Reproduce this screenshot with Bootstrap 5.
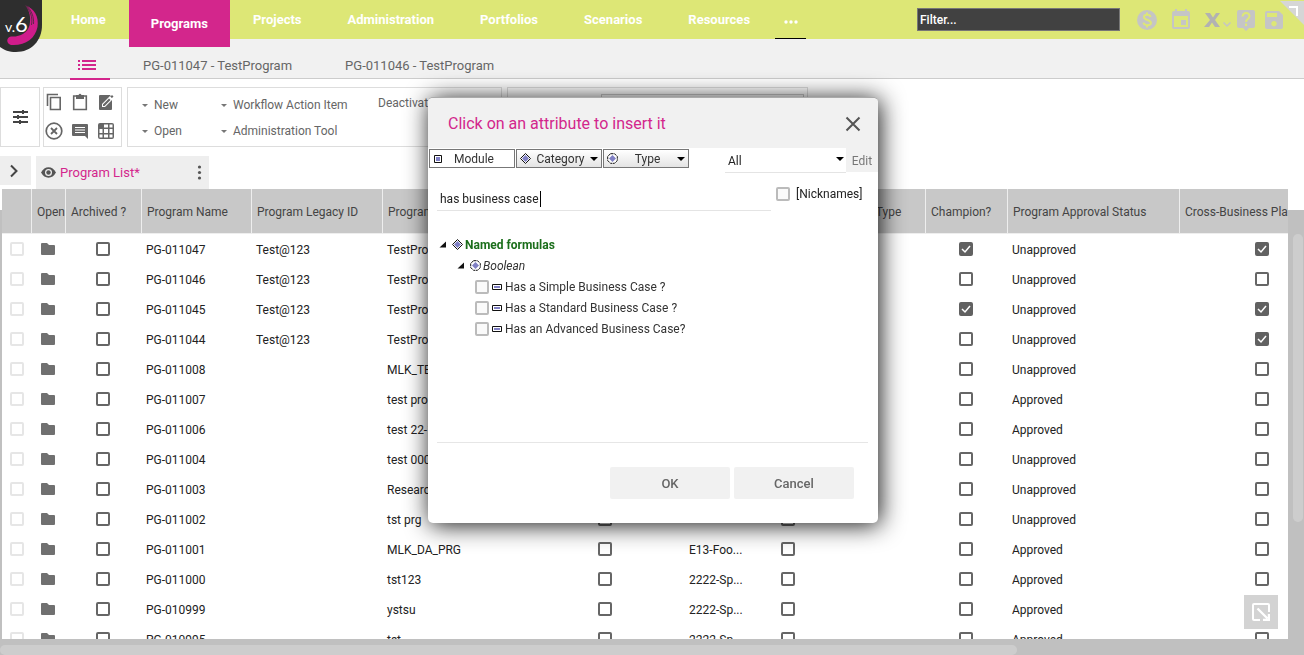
<!DOCTYPE html>
<html lang="en">
<head>
<meta charset="utf-8">
<meta name="viewport" content="width=device-width, initial-scale=1">
<title>Programs</title>
<link rel="stylesheet" href="https://cdn.jsdelivr.net/npm/bootstrap@5.3.0/dist/css/bootstrap.min.css">
<style>
:root{--pink:#d3268c;--lime:#dde776;--ink:#666}
body{font-family:Roboto,"Liberation Sans",sans-serif;font-size:12px;line-height:16px;color:#222}
button,input,select{font-family:inherit}
a{text-decoration:none}
svg{display:block;flex:none}
.topbar{background:var(--lime);height:39px;position:relative;z-index:2}
.logo{width:42px}
.topmenu .nav-link{color:#fff;font-size:13px;font-weight:700;line-height:18px;height:39px;padding:11px 23px 0}
.topmenu .nav-link.active{background:var(--pink);height:47px;padding:15px 22px 0}
.topmenu{margin-left:6px}
.topmenu .more{width:31px;margin-left:2px;padding:20px 0 0;border-bottom:1px solid #000}
.filter-box{width:203px;height:23px;background:#414141;border:1px solid #777;color:#fff;font-size:12px;padding:0 2px}
.filter-box::placeholder{color:#fff;opacity:1;font-weight:500}
.top-icons{width:184px;padding-left:16px;gap:13px;color:#c5c5c5}
.icon-btn{border:0;background:none;padding:0;color:inherit;display:block}
.excel svg{overflow:visible}
.fold{position:absolute;right:0;top:1px}
.subbar{height:40px;background:#f1f1f1;border-bottom:1px solid #ccc;padding-left:70px}
.subbar a{color:var(--ink);font-size:13px;line-height:18px;padding-top:18px;height:41px;margin-right:53px}
.subbar a.active{width:40px;border-bottom:2px solid var(--pink);color:var(--pink);padding:21px 0 0 8px;margin-right:33px}
.ribbon{padding-top:8px;height:68px}
.panel{border:1px solid #ddd;height:60px;background:#fff;color:var(--ink)}
.panel-tune{width:40px}
.panel-tools{width:79px;margin:0 5px 0 3px;display:grid;grid-template-columns:repeat(3,26px);grid-template-rows:28px 30px;justify-content:end;place-items:center;padding-right:2px}
.panel-menu{width:375px;margin-right:5px;padding:4px 0 0 14px;display:grid;grid-template-columns:79px 157px 1fr;grid-template-rows:26px 26px;align-items:center}
.panel-menu button{border:0;background:none;padding:0;color:var(--ink);text-align:left;display:flex;align-items:center;gap:6px;white-space:nowrap}
.panel-menu .plain{padding-bottom:4px}
.caret-s{border:3px solid transparent;border-top-color:#777;border-bottom:0;width:6px}
.panel-view{width:301px;padding:6px 3px 0 93px}
.panel-view div{border:1px solid #ccc;height:40px}
.viewtabs{height:42px;padding-top:9px}
.expander{width:31px;height:29px;background:#eee;margin-right:5px;padding:0 0 0 6px}
.viewtab{width:173px;height:33px;background:#eee;color:var(--pink);font-size:13px;padding:0 7px 0 5px}
.viewtab a{color:var(--pink)}
.gridzone{flex:1;min-height:0;position:relative;padding:0 16px 0 2px;background:linear-gradient(#fff 21px,#c0c0c0 21px)}
.gridclip{height:100%;overflow:hidden;background:#fff}
.grid-t{table-layout:fixed;width:1344px;border-collapse:separate;border-spacing:0}
.grid-t th{height:45px;background:#c8c8c8;font-weight:400;color:#444;border-right:1px solid #eee;border-bottom:1px solid #eee;padding:1px 0 0 5px;white-space:nowrap;overflow:hidden}
.grid-t td{height:30px;padding:1px 4px 0;white-space:nowrap;overflow:hidden}
.grid-t td.mid{padding:0 2px 0 0}
.grid-t td.mid:first-child{padding:0}
.grid-t td.mid svg{margin:0 auto}
.tick{appearance:none;width:14px;height:14px;border:2px solid #666;border-radius:2px;background:#fff;margin:0;display:block;flex:none}
td .tick{margin:0 auto}
.tick:checked{background:#616161 url("data:image/svg+xml,%3Csvg xmlns='http://www.w3.org/2000/svg' viewBox='0 0 10 10'%3E%3Cpath d='M1 5l3 3 5-6' fill='none' stroke='white' stroke-width='1.5'/%3E%3C/svg%3E");border-color:#616161}
.tick.faint{border-color:#e6e6e6}
.tick.soft{border-color:#bbb;background:#fafafa}
.vthumb{position:absolute;right:1px;top:45px;width:10px;height:64%;border-radius:5px;background:#cdcdcd}
.hbar{height:16px;background:#c0c0c0;padding-top:6px}
.hbar div{width:78%;height:10px;border-radius:5px;background:#cdcdcd}
.corner{position:absolute;right:26px;bottom:10px;width:34px;height:34px;border:0;background:#d3d3d3;padding:8px;color:#fff}
.layer{display:block;padding-left:2px;pointer-events:none}
.layer .modal-dialog{max-width:450px;margin:97px auto 0}
.dlg{border:0;border-top:1px solid #aaa;border-radius:5px;height:426px;box-shadow:2px 2px 24px rgba(0,0,0,.92);overflow:hidden}
.dlg-head{background:#f1f1f1;height:50px;padding:1px 17px 0 20px}
.dlg-head h1{font-size:16px;line-height:20px;font-weight:400;color:var(--pink);margin:0}
.chips{gap:1px;padding:1px 0 0 1px}
.chip{width:86px;height:19px;border:1px solid #777;background:linear-gradient(#fff,#e4e4e4);padding:0 3px;display:flex;align-items:center;color:#333}
.chip.on{background:#fff;padding:0 8px 0 4px}
.chip span{flex:1;text-align:center}
.caret-b{border:4px solid transparent;border-top:4px solid #000;border-bottom:0}
.scope{width:121px;height:25px;margin-left:36px;appearance:none;border:0;border-bottom:1px solid #e4e4e4;padding:2px 3px 0;color:#222;background:#fff url("data:image/svg+xml,%3Csvg xmlns='http://www.w3.org/2000/svg' viewBox='0 0 8 4'%3E%3Cpath d='M0 0h8L4 4z'/%3E%3C/svg%3E") right 2px top 9px/8px 4px no-repeat}
.edit-btn{flex:1;height:24px;border:0;background:#f1f1f1;color:#777;padding:2px 0 0}
.findrow{padding:13px 0 0 9px;height:38px}
.find{width:334px;height:25px;border:0;border-bottom:1px solid #e4e4e4;padding:1px 3px 0;color:#222;outline:0}
.findwrap{position:relative}
.cursor-bar{position:absolute;left:103px;top:5px;width:1px;height:16px;background:#000}
.nick{gap:6px;margin-left:5px;height:16px}
.tree{list-style:none;margin:0 10px 0 9px;padding:23px 0 0 2px;height:232px;border-bottom:1px solid #e6e6e6}
.tree li{height:21px;display:flex;align-items:center;gap:2px;color:#333}
.tree .l2{padding-left:18px}
.tree .l3{padding-left:36px}
.tree label{display:flex;align-items:center;gap:3px}
.named{color:#1b6e1b;font-weight:700}
.dlg-foot{padding:24px 24px 0;gap:4px}
.dlg-foot button{width:120px;height:32px;border:0;border-radius:2px;background:#f1f1f1;color:#666;font-size:13px;font-weight:500;padding-top:2px}
</style>
</head>
<body class="d-flex flex-column vh-100 overflow-hidden">
<svg width="0" height="0" class="position-absolute" aria-hidden="true">
  <symbol id="dia" viewBox="0 0 11 11"><path d="M5.500 .5l5 5-5 5-5-5z" fill="#fff" stroke="#111"/><path d="M5.500 2l3.500 3.500L5.500 9 2 5.500z" fill="#8080c4"/></symbol>
  <symbol id="hex" viewBox="0 0 11 11"><path d="M3.500 .7h4l2.800 2.800v4l-2.800 2.800h-4L.7 7.500v-4z" fill="#fff" stroke="#111" stroke-dasharray="3 .6"/><path d="M5.500 2l3.500 3.500L5.500 9 2 5.500z" fill="#8080c4"/></symbol>
  <symbol id="bar" viewBox="0 0 10 6"><path d="M.5 .5h9v5h-9z" fill="#fff" stroke="#111"/><path d="M2 2h6v2H2z" fill="#8080c4"/></symbol>
  <symbol id="tri" viewBox="0 0 7 7"><path d="M7 .5v6H.5z" fill="#111"/></symbol>
  <symbol id="folder" viewBox="0 0 14 12"><path d="M1 0h5l2 2h5q1 0 1 1v8q0 1-1 1H1q-1 0-1-1V1q0-1 1-1z" fill="#707070"/></symbol>
</svg>

<header class="topbar d-flex">
  <a href="#" class="logo" aria-label="v.6 home">
    <svg width="42" height="52" viewBox="0 0 42 52"><path d="M0 0h42v25c0 16-11 27-26 27C9 52 4 50 0 47z" fill="#2e2e2e"/><path d="M25 5c10 4 14 12 12.500 22C35 39 25 46 11 45c-5-1-5-8 0-8.500 9 .5 16-3 18.500-11C31 18 30 11 25 5z" fill="#d01c8b"/><path d="M25 5c5 5 8 12 6.500 20M26 5c6 6 8 12 7.500 19" fill="none" stroke="#2e2e2e" stroke-width=".7"/><text x="5" y="32" font-family="Lato,sans-serif" font-size="14" fill="#fff">v.<tspan font-size="22">6</tspan></text></svg>
  </a>
  <nav class="topmenu nav flex-nowrap me-auto">
    <a class="nav-link" href="#">Home</a>
    <a class="nav-link active" href="#">Programs</a>
    <a class="nav-link" href="#">Projects</a>
    <a class="nav-link" href="#">Administration</a>
    <a class="nav-link" href="#">Portfolios</a>
    <a class="nav-link" href="#">Scenarios</a>
    <a class="nav-link" href="#">Resources</a>
    <a class="nav-link more" href="#" aria-label="More"><svg width="14" height="4" class="mx-auto"><g fill="#fff"><circle cx="2" cy="2" r="1.700"/><circle cx="7" cy="2" r="1.700"/><circle cx="12" cy="2" r="1.700"/></g></svg></a>
  </nav>
  <input class="filter-box mt-2" type="text" placeholder="Filter..." aria-label="Filter">
  <div class="top-icons d-flex align-items-center">
    <button class="icon-btn" aria-label="Currency"><svg width="22" height="22" viewBox="0 0 22 22"><circle cx="11" cy="11" r="10" fill="currentColor"/><path d="M14.500 8c-.5-3-6.500-3-6.500 0 0 3.500 7 2.500 7 6 0 3-7 3-7.500-.3M11 3.500v2.500M11 16v2.500" fill="none" stroke="#dde776" stroke-width="2"/></svg></button>
    <button class="icon-btn" aria-label="Calendar"><svg width="20" height="22" viewBox="0 0 20 22"><path d="M4 0h2v2h8V0h2v2h1q2 0 2 2v14q0 2-2 2H3q-2 0-2-2V4q0-2 2-2h1zM3 7v11h14V7zm7 4h5v5h-5z" fill="currentColor" fill-rule="evenodd"/></svg></button>
    <button class="icon-btn excel" aria-label="Export to Excel"><svg width="20" height="22" viewBox="0 0 20 22"><path d="M1 4h5l3 4.500L12 4h4l-5 7 5 7h-5l-3-4.500L5 18H0l6-7z" fill="#b2b2b2"/><path d="M19.500 13.500l3.500 3.500 3.500-3.500" fill="none" stroke="currentColor" stroke-width="1.500"/></svg></button>
    <div class="d-flex align-items-center" style="gap:10px">
      <button class="icon-btn" aria-label="Help"><svg width="18" height="22" viewBox="0 0 18 22"><path d="M2 1h14q2 0 2 2v14q0 2-2 2h-4l-3 3-3-3H2q-2 0-2-2V3q0-2 2-2z" fill="currentColor"/><path d="M5.500 7.500C6 3 12 3 12.500 7c0 3-3.500 3-3.500 6M9 14.500V17" fill="none" stroke="#dde776" stroke-width="2"/></svg></button>
      <button class="icon-btn" aria-label="Save"><svg width="18" height="18" viewBox="0 0 18 18"><path d="M2 0h12l4 4v12q0 2-2 2H2q-2 0-2-2V2q0-2 2-2zm0 2v4h10V2zm7 8a2.700 2.700 0 1 0 .01 0z" fill="currentColor" fill-rule="evenodd"/></svg></button>
    </div>
  </div>
  <svg class="fold" width="24" height="24"><path d="M0 0h24v24z" fill="#d6d6d6"/><path d="M9 6h8v9" fill="none" stroke="#fff" stroke-width="2"/></svg>
</header>

<nav class="subbar d-flex">
  <a href="#" class="active" aria-label="Program list"><svg width="18" height="10" viewBox="0 0 18 10"><path d="M0 1h2M0 5h2M0 9h2M4 1h14M4 5h14M4 9h14" stroke="currentColor" stroke-width="2"/></svg></a>
  <a href="#">PG-011047 - TestProgram</a>
  <a href="#">PG-011046 - TestProgram</a>
</nav>

<section class="ribbon d-flex">
  <button class="panel panel-tune p-0" aria-label="Settings"><svg class="mx-auto" width="15" height="14" viewBox="0 0 15 14"><path d="M0 2h9M11 2h4M10 0v4M0 7h4M6 7h9M5 5v4M0 12h6M8 12h7M7 10v4" stroke="#444" stroke-width="2" fill="none"/></svg></button>
  <div class="panel panel-tools">
    <button class="icon-btn" aria-label="Copy"><svg width="16" height="18" viewBox="0 0 16 18"><path d="M1.500 13V1.500H12M4.500 4.500h9.700v12H4.500z" fill="none" stroke="currentColor" stroke-width="1.600"/></svg></button>
    <button class="icon-btn" aria-label="Paste"><svg width="16" height="18" viewBox="0 0 16 18"><path d="M1.700 3h12.600v13.500H1.700z" fill="none" stroke="currentColor" stroke-width="1.600"/><path d="M4 2h2.500q1.500-2.500 3 0H12v4H4z" fill="currentColor"/></svg></button>
    <button class="icon-btn" aria-label="Edit"><svg width="16" height="18" viewBox="0 0 16 18"><path d="M2 2h10l2 3v11q0 1-1 1H2q-1 0-1-1V3q0-1 1-1z" fill="currentColor"/><path d="M4 14v-3l8-8 3 3-8 8z" fill="#fff"/><path d="M5 13v-1.500l6-6 1.500 1.500-6 6zM12.500 3.500L14 2l1.500 1.500L14 5z" fill="currentColor"/></svg></button>
    <button class="icon-btn" aria-label="Delete"><svg width="18" height="18" viewBox="0 0 18 18"><circle cx="9" cy="9" r="7.800" fill="none" stroke="currentColor" stroke-width="1.700"/><path d="M6 6l6 6M12 6l-6 6" stroke="currentColor" stroke-width="1.800"/></svg></button>
    <button class="icon-btn" aria-label="Comments"><svg width="16" height="16" viewBox="0 0 16 16"><path d="M1 1h14q1 0 1 1v14l-3-3H1q-1 0-1-1V2q0-1 1-1zm2 3v1h10V4zm0 2.500v1h10v-1zM3 9v1h10V9z" fill="currentColor" fill-rule="evenodd"/></svg></button>
    <button class="icon-btn" aria-label="Grid"><svg width="16" height="16" viewBox="0 0 16 16"><path d="M2 0h12q2 0 2 2v12q0 2-2 2H2q-2 0-2-2V2q0-2 2-2z" fill="currentColor"/><path d="M6 1.500h4v3H6zM11.500 1.500h3v3h-3zM6 6h4v4H6zM11.500 6h3v4h-3zM1.500 6h3v4h-3zM1.500 11.500h3v3h-3zM6 11.500h4v3H6zM11.500 11.500h3v3h-3z" fill="#fff"/></svg></button>
  </div>
  <div class="panel panel-menu">
    <button><span class="caret-s"></span>New</button>
    <button><span class="caret-s"></span>Workflow Action Item</button>
    <button class="plain">Deactivate</button>
    <button><span class="caret-s"></span>Open</button>
    <button><span class="caret-s"></span>Administration Tool</button>
  </div>
  <div class="panel panel-view"><div></div></div>
</section>

<section class="viewtabs d-flex">
  <button class="icon-btn expander" aria-label="Expand"><svg width="16" height="16" viewBox="0 0 16 16"><path d="M5 2.500L10.500 8 5 13.500" fill="none" stroke="#444" stroke-width="2"/></svg></button>
  <div class="viewtab d-flex align-items-center">
    <svg width="15" height="11" viewBox="0 0 15 11" class="me-1"><path d="M0 5.500Q3 .3 7.500 .3T15 5.500Q12 10.700 7.500 10.700T0 5.500z" fill="#555"/><circle cx="7.500" cy="5.500" r="3.500" fill="#eee"/><circle cx="7.500" cy="5.500" r="2.200" fill="#555"/></svg>
    <a href="#" class="me-auto">Program List*</a>
    <button class="icon-btn" aria-label="View menu"><svg width="5" height="15" viewBox="0 0 5 15"><g fill="#555"><circle cx="2.500" cy="2" r="1.600"/><circle cx="2.500" cy="7.500" r="1.600"/><circle cx="2.500" cy="13" r="1.600"/></g></svg></button>
  </div>
</section>

<main class="gridzone">
  <div class="gridclip">
    <table class="grid-t">
      <colgroup><col style="width:30px"><col style="width:34px"><col style="width:76px"><col style="width:110px"><col style="width:131px"><col style="width:144px"><col style="width:158px"><col style="width:71px"><col style="width:66px"><col style="width:104px"><col style="width:82px"><col style="width:172px"><col style="width:166px"></colgroup>
      <thead><tr><th></th><th>Open</th><th>Archived ?</th><th>Program Name</th><th>Program Legacy ID</th><th>Program Title</th><th></th><th></th><th></th><th>Program Type</th><th>Champion?</th><th>Program Approval Status</th><th>Cross-Business Planning</th></tr></thead>
      <tbody id="rows"></tbody>
    </table>
  </div>
  <div class="vthumb"></div>
  <button class="corner" aria-label="Resize"><svg width="18" height="18" viewBox="0 0 18 18"><path d="M17 9V2q0-1-1-1H2Q1 1 1 2v14q0 1 1 1h6" fill="none" stroke="currentColor" stroke-width="2"/><path d="M5.500 5.500l10 10M17 11v6h-6" fill="none" stroke="currentColor" stroke-width="2.400"/></svg></button>
</main>
<div class="hbar"><div></div></div>

<div class="modal layer" role="dialog" aria-labelledby="dlgTitle">
  <div class="modal-dialog">
    <div class="modal-content dlg">
      <div class="dlg-head d-flex align-items-center justify-content-between">
        <h1 id="dlgTitle">Click on an attribute to insert it</h1>
        <button class="icon-btn" aria-label="Close"><svg width="16" height="16" viewBox="0 0 16 16"><path d="M1.500 1.500l13 13M14.500 1.500l-13 13" stroke="#555" stroke-width="2"/></svg></button>
      </div>
      <div class="d-flex">
        <div class="chips d-flex">
          <button class="chip on"><svg width="8" height="8" viewBox="0 0 8 8"><path d="M.5 .5h7v7h-7z" fill="#fff" stroke="#111"/><path d="M2 2h4v4H2z" fill="#8080c4"/></svg><span>Module</span></button>
          <button class="chip"><svg width="11" height="11"><use href="#dia"/></svg><span>Category</span><i class="caret-b"></i></button>
          <button class="chip"><svg width="11" height="11"><use href="#hex"/></svg><span>Type</span><i class="caret-b"></i></button>
        </div>
        <select class="scope" aria-label="Scope"><option>All</option></select>
        <button class="edit-btn">Edit</button>
      </div>
      <div class="findrow d-flex">
        <div class="findwrap"><input class="find" type="text" value="has business case" aria-label="Search attributes"><span class="cursor-bar"></span></div>
        <label class="nick d-flex align-items-center"><input type="checkbox" class="tick soft">[Nicknames]</label>
      </div>
      <ul class="tree">
        <li><svg width="7" height="7"><use href="#tri"/></svg><svg class="ms-1" width="11" height="11"><use href="#dia"/></svg><span class="named">Named formulas</span></li>
        <li class="l2"><svg width="7" height="7"><use href="#tri"/></svg><svg class="ms-1" width="11" height="11"><use href="#hex"/></svg><em>Boolean</em></li>
        <li class="l3"><label><input type="checkbox" class="tick soft"><svg width="10" height="6"><use href="#bar"/></svg>Has a Simple Business Case ?</label></li>
        <li class="l3"><label><input type="checkbox" class="tick soft"><svg width="10" height="6"><use href="#bar"/></svg>Has a Standard Business Case ?</label></li>
        <li class="l3"><label><input type="checkbox" class="tick soft"><svg width="10" height="6"><use href="#bar"/></svg>Has an Advanced Business Case?</label></li>
      </ul>
      <div class="dlg-foot d-flex justify-content-end"><button>OK</button><button>Cancel</button></div>
    </div>
  </div>
</div>

<script src="https://cdn.jsdelivr.net/npm/bootstrap@5.3.0/dist/js/bootstrap.bundle.min.js"></script>
<script>
// code, legacy id, title, location, champion, status, cross-business
const programs = [
  ['PG-011047','Test@123','TestProgram','',1,'Unapproved',1],
  ['PG-011046','Test@123','TestProgram','',0,'Unapproved',0],
  ['PG-011045','Test@123','TestProgram','',1,'Unapproved',1],
  ['PG-011044','Test@123','TestProgram','',0,'Unapproved',1],
  ['PG-011008','','MLK_TEST','',0,'Unapproved',0],
  ['PG-011007','','test program','',0,'Approved',0],
  ['PG-011006','','test 22-1','',0,'Approved',0],
  ['PG-011004','','test 0001','',0,'Unapproved',0],
  ['PG-011003','','Research','',0,'Unapproved',0],
  ['PG-011002','','tst prg','',0,'Unapproved',0],
  ['PG-011001','','MLK_DA_PRG','E13-Foo...',0,'Approved',0],
  ['PG-011000','','tst123','2222-Sp...',0,'Approved',0],
  ['PG-010999','','ystsu','2222-Sp...',0,'Approved',0],
  ['PG-010995','','tst','2222-Sp...',0,'Approved',0]
];
const box = (name, on, cls = '') => `<td class="mid"><input type="checkbox" class="tick ${cls}" aria-label="${name}" ${on ? 'checked' : ''}></td>`;
document.getElementById('rows').innerHTML = programs.map(([id, legacy, title, loc, champ, status, cross]) =>
  `<tr>${box('Select ' + id, 0, 'faint')}<td class="mid"><svg width="14" height="12"><use href="#folder"/></svg></td>${box('Archived', 0)}<td>${id}</td><td>${legacy}</td><td>${title}</td>${box('Active', 0)}<td>${loc}</td>${box('Shared', 0)}<td></td>${box('Champion', champ)}<td>${status}</td>${box('Cross-Business', cross)}</tr>`).join('');
</script>
</body>
</html>
